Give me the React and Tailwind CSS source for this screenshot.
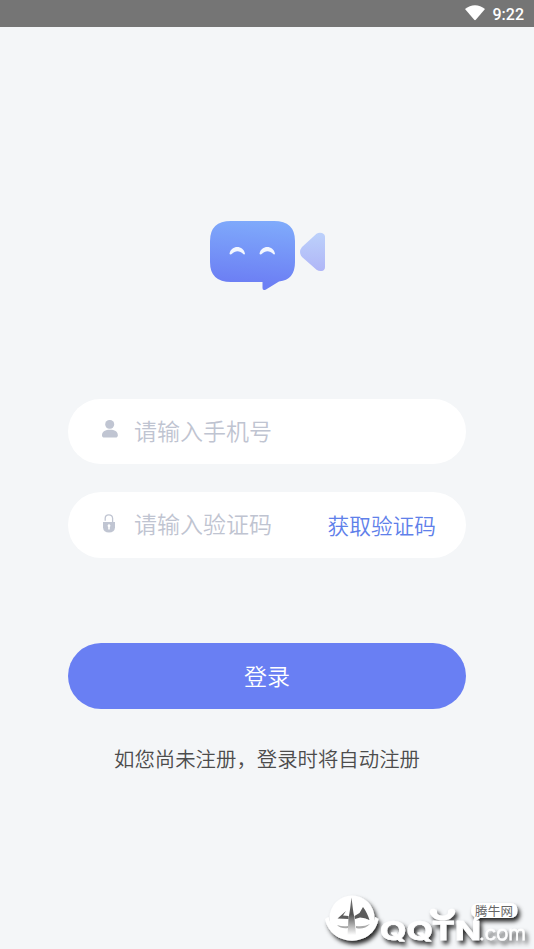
import { useState } from 'react'

function WifiIcon() {
  return (
    <svg width="20" height="16" viewBox="0 0 20 16" fill="#fff" className="-mt-[2px]">
      <path d="M0 4C6 -1.100 14 -1.100 20 4L10.800 14.800Q10 15.600 9.200 14.800Z" />
    </svg>
  )
}

function Logo() {
  return (
    <svg width="116" height="71" viewBox="0 0 116 71">
      <defs>
        <linearGradient id="bubble" x1="0.55" y1="0" x2="0.45" y2="1">
          <stop offset="0" stopColor="#7faafb" />
          <stop offset="0.9" stopColor="#6c7ff4" />
        </linearGradient>
        <linearGradient id="lens" x1="0" y1="0" x2="0" y2="1">
          <stop offset="0" stopColor="#bcd1fb" />
          <stop offset="1" stopColor="#b0b6f7" />
        </linearGradient>
      </defs>
      <path
        fill="url(#bubble)"
        d="M21 1H64Q85 1 85 21V42Q85 60 69 61.5L56 69.5Q52.5 71.2 52.5 68V62H21Q0 62 0 42V21Q0 1 21 1Z"
      />
      <path fill="#f2f6ff" d="M19.500 33.800C21 24.800 33.500 24.800 35 33.800C34.700 34.800 33.500 34.500 33 33.800C30 30.300 25 30.300 22 33.800C21.300 34.600 19.800 34.800 19.500 33.800Z" />
      <path fill="#f2f6ff" d="M49.500 33.800C51 24.800 63.500 24.800 65 33.800C64.700 34.800 63.500 34.500 63 33.800C60 30.300 55 30.300 52 33.800C51.300 34.600 49.800 34.800 49.500 33.800Z" />
      <path fill="url(#lens)" d="M106.500 13.800Q109 12 112 13Q115 14 115 17V47Q115 50 112 51Q109 51.500 106.500 49.800L92 37Q88 32 92 27Z" />
    </svg>
  )
}

function UserIcon() {
  return (
    <svg width="16" height="18" viewBox="0 0 16 18" fill="#c0c5d2">
      <rect x="3.200" y="0" width="9" height="8.800" rx="4.200" />
      <path d="M0 15.200C0 11.500 3.500 9.800 8 9.800S15.800 11.500 15.800 15.200C15.800 16.800 15 17.500 13.500 17.500H2.300C0.800 17.500 0 16.800 0 15.200Z" />
    </svg>
  )
}

function LockIcon() {
  return (
    <svg width="12" height="19" viewBox="0 0 12 19">
      <path d="M2.200 6.800V4.300Q2.200 0.800 5.800 0.800T9.600 4.300V8" fill="none" stroke="#c0c5d2" strokeWidth="1.300" />
      <path d="M0 8H12V13.500Q11.500 18.600 6 18.600T0 13.500Z" fill="#c0c5d2" />
      <path d="M6 10.200a1.500 1.500 0 0 1 .8 2.700V15.500H5.200V12.900A1.500 1.500 0 0 1 6 10.200Z" fill="#fff" />
    </svg>
  )
}

function Watermark() {
  return (
    <svg
      width="214"
      height="64"
      viewBox="0 0 214 64"
      className="absolute right-0 bottom-0 [font-family:'Inter','Noto_Sans_CJK_SC',sans-serif]"
    >
      <defs>
        <filter id="shade" x="-10%" y="-20%" width="125%" height="150%">
          <feDropShadow dx="2.500" dy="3.500" stdDeviation="2.200" floodColor="#000" floodOpacity="0.850" />
        </filter>
        <linearGradient id="leaf" x1="0" y1="0" x2="0" y2="1">
          <stop offset="0" stopColor="#777" />
          <stop offset="0.450" stopColor="#555" />
          <stop offset="1" stopColor="#fff" />
        </linearGradient>
        <filter id="soft">
          <feGaussianBlur stdDeviation="0.600" />
        </filter>
      </defs>
      <g fill="#fff" filter="url(#shade)">
        <circle cx="32" cy="33" r="22.500" />
        <path d="M8.500 32L5 34C8 48 19 55.500 32 55.500C45 55.500 56 48 58.500 34L55 32C53 43 44 51 32 51C20 51 11 43 8.500 32Z" />
        <path d="M110 28C109 24 113 22.500 116.500 25C117.500 26.500 116.500 28 117.500 29C120 31.200 125 31.200 127.500 29C128.500 28 127.500 26.500 128.500 25C132 22.500 136 24 135 28C133 33 128 35.500 122.500 35.500S112 33 110 28Z" />
        <text x="60" y="55" fontSize="25.500" fontWeight="700" stroke="#fff" strokeWidth="0.600" strokeLinejoin="round" textLength="101" lengthAdjust="spacingAndGlyphs">QQTN</text>
        <text x="159" y="55" fontSize="20" fontWeight="300" stroke="#fff" strokeWidth="0.400" textLength="47" lengthAdjust="spacingAndGlyphs">.com</text>
        <path d="M160 18H190Q197.500 18 197.500 25.500T190 33H160L153 38L154.500 32Q151 30 151 25.500Q151 18 160 18Z" />
      </g>
      <g filter="url(#soft)">
        <path fill="url(#leaf)" d="M31.500 12.500C32.500 20 33 27 34.500 33L36 50H27.500L28.500 33C30 27 30.500 20 31.500 12.500Z" />
        <path fill="#5c5c5c" d="M26 26L17.500 33.500L28.500 34L28.500 31L23 30.500Z" />
        <path fill="#5c5c5c" d="M43 22L39.500 28L34.500 31L35 34L40 32.500C45 33 47 34 49.500 35C48 30 46 26 43 22Z" />
        <path fill="#aaa" d="M17 40Q23 42 28 41V43Q21 44 17 40ZM36 41Q44 42 50 39Q44 45 36 43Z" />
      </g>
      <text x="155" y="30.500" fontSize="12.500" fill="#666" textLength="38">腾牛网</text>
    </svg>
  )
}

export default function App() {
  const [phone, setPhone] = useState('')
  const [code, setCode] = useState('')

  return (
    <div className="relative h-[949px] w-[534px] overflow-hidden bg-[#f4f6f8] [font-family:'Roboto','Noto_Sans_CJK_SC',sans-serif]">
      {/* Status bar */}
      <div className="flex h-[27px] items-center justify-end gap-2 bg-[#757575] pr-[10px] text-white">
        <WifiIcon />
        <span className="pt-[2px] text-base leading-none font-medium">9:22</span>
      </div>

      <form className="flex flex-col px-[68px]" onSubmit={(e) => e.preventDefault()}>
        <div className="flex h-[372px] justify-center pt-[193px] pl-[2px]">
          <Logo />
        </div>

        <label className="flex h-[65px] items-center rounded-full bg-white pl-[34px]">
          <span className="-mt-[6px]"><UserIcon /></span>
          <input
            type="tel"
            value={phone}
            onChange={(e) => setPhone(e.target.value)}
            placeholder="请输入手机号"
            className="mt-[2px] ml-4 w-[200px] text-[23px] leading-8 font-[350] outline-none placeholder:text-[#bfc4d1]"
          />
        </label>

        <div className="mt-7 flex h-[66px] items-center rounded-full bg-white pr-[30px] pl-[35px]">
          <span className="-mt-1"><LockIcon /></span>
          <input
            type="text"
            value={code}
            onChange={(e) => setCode(e.target.value)}
            placeholder="请输入验证码"
            className="mt-px ml-[19px] w-[160px] text-[23px] leading-8 font-[350] outline-none placeholder:text-[#bfc4d1]"
          />
          <button type="button" className="mt-[3px] ml-auto text-[21.7px] leading-8 font-[350] whitespace-nowrap text-[#6080ea]">
            获取验证码
          </button>
        </div>

        <button type="submit" className="mt-[85px] h-[66px] rounded-full bg-[#697ff3] pt-[4px] text-[23px] font-[350] text-white">
          登录
        </button>

        <p className="mt-[36px] text-center text-[20.4px] leading-[30px] font-[350] whitespace-nowrap text-[#4c4c4c]">
          如您尚未注册，登录时将自动注册
        </p>
      </form>

      <Watermark />
    </div>
  )
}
